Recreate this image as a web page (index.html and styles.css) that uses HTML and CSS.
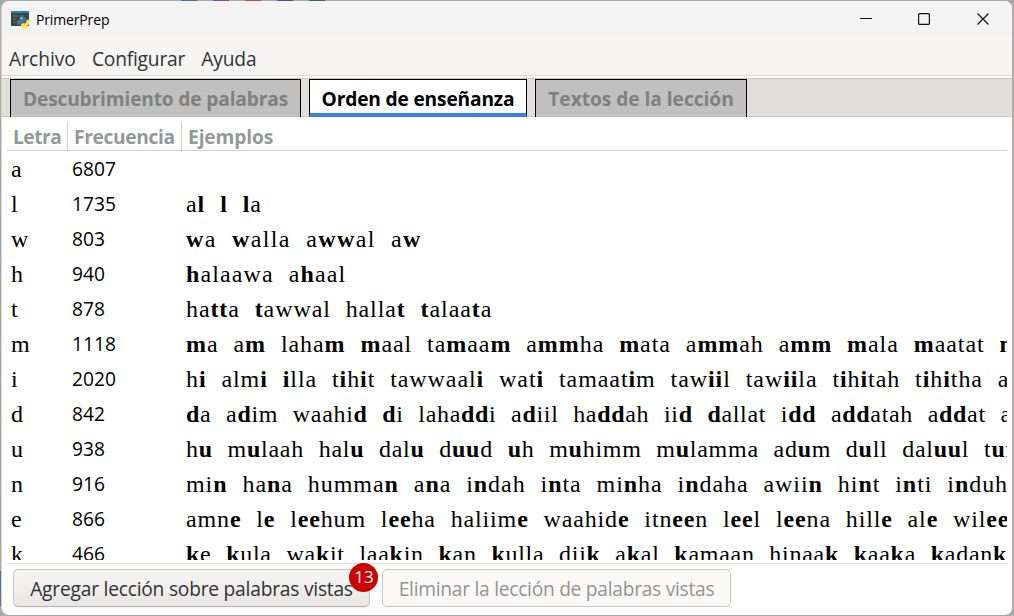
FILE: index.html
```html
<!DOCTYPE html>
<html lang="es">
<head>
<meta charset="utf-8">
<title>PrimerPrep</title>
<link rel="stylesheet" href="styles.css">
</head>
<body>
<div class="desktop">
<div class="window">
  <header class="titlebar">
    <svg class="app-icon" width="19" height="18" viewBox="0 0 19 18">
      <rect x="0" y="0" width="18" height="15" fill="#3f4547"/>
      <rect x="0" y="0" width="18" height="2" fill="#1687d9"/>
      <path d="M2 5h5M9 5h4M2 8h3M2 11h4" stroke="#4f8a52" stroke-width="1"/>
      <path d="M8.500 9V7.500Q8.500 5.500 11 5.500Q14.500 5.500 14.500 8V10Q14.500 11.500 13 11.500H10.500Q9 11.500 9 14H8Q6 14 6 11Q6 9 8.500 9Z" fill="#3f7db5"/>
      <path d="M15.500 8.500H16Q18.500 8.500 18.500 11.500Q18.500 14 16.500 14.200V15.500Q16 17.500 13 17.500Q10 17.500 10 15V13.500Q10 12.200 11.500 12.200H14Q15.500 12 15.500 8.500Z" fill="#ffdc4a"/>
      <circle cx="10.300" cy="7.300" r=".7" fill="#fff"/><circle cx="14.300" cy="15.700" r=".7" fill="#fff"/>
    </svg>
    <span class="title">PrimerPrep</span>
    <svg class="controls" width="130" height="14" viewBox="0 0 130 14" fill="none" stroke="#111">
      <path d="M0 6.500H12" stroke-width="1"/>
      <rect x="58.600" y="1.600" width="10.800" height="10.800" rx="1" stroke-width="1.200"/>
      <path d="M117.500 1.500L128.500 12.500M128.500 1.500L117.500 12.500" stroke-width="1.200"/>
    </svg>
  </header>
  <nav class="menubar"><span class="m1">Archivo</span><span class="m2">Configurar</span><span class="m3">Ayuda</span></nav>
  <div class="tabs">
    <div class="tab t1"><span>Descubrimiento de palabras</span></div>
    <div class="tab t2 active"><span>Orden de enseñanza</span></div>
    <div class="tab t3"><span>Textos de la lección</span></div>
  </div>
  <main class="table">
    <div class="head"><span class="h1">Letra</span><span class="h2">Frecuencia</span><span class="h3">Ejemplos</span></div>
    <div class="rows">
      <div class="row"><span class="letter">a</span><span class="freq">6807</span><span class="words"></span></div>
      <div class="row"><span class="letter">l</span><span class="freq">1735</span><span class="words">a<b>l</b> <b>l</b> <b>l</b>a</span></div>
      <div class="row"><span class="letter">w</span><span class="freq">803</span><span class="words r-w"><b>w</b>a <b>w</b>alla a<b>ww</b>al a<b>w</b></span></div>
      <div class="row"><span class="letter">h</span><span class="freq">940</span><span class="words r-h"><b>h</b>alaawa a<b>h</b>aal</span></div>
      <div class="row"><span class="letter">t</span><span class="freq">878</span><span class="words r-t">ha<b>tt</b>a <b>t</b>awwal halla<b>t</b> <b>t</b>alaa<b>t</b>a</span></div>
      <div class="row"><span class="letter">m</span><span class="freq">1118</span><span class="words r-m"><b>m</b>a a<b>m</b> laha<b>m</b> <b>m</b>aal ta<b>m</b>aa<b>m</b> a<b>mm</b>ha <b>m</b>ata a<b>mm</b>ah a<b>mm</b> <b>m</b>ala <b>m</b>aatat <b>m</b></span></div>
      <div class="row"><span class="letter">i</span><span class="freq">2020</span><span class="words r-i">h<b>i</b> alm<b>i</b> <b>i</b>lla t<b>i</b>h<b>i</b>t tawwaal<b>i</b> wat<b>i</b> tamaat<b>i</b>m taw<b>ii</b>l taw<b>ii</b>la t<b>i</b>h<b>i</b>tah t<b>i</b>h<b>i</b>tha a</span></div>
      <div class="row"><span class="letter">d</span><span class="freq">842</span><span class="words r-d"><b>d</b>a a<b>d</b>im waahi<b>d</b> <b>d</b>i laha<b>dd</b>i a<b>d</b>iil ha<b>dd</b>ah ii<b>d</b> <b>d</b>allat i<b>dd</b> a<b>dd</b>atah a<b>dd</b>at a</span></div>
      <div class="row"><span class="letter">u</span><span class="freq">938</span><span class="words r-u">h<b>u</b> m<b>u</b>laah hal<b>u</b> dal<b>u</b> d<b>uu</b>d <b>u</b>h m<b>u</b>himm m<b>u</b>lamma ad<b>u</b>m d<b>u</b>ll dal<b>uu</b>l t<b>u</b>r</span></div>
      <div class="row"><span class="letter">n</span><span class="freq">916</span><span class="words r-n">mi<b>n</b> ha<b>n</b>a humma<b>n</b> a<b>n</b>a i<b>n</b>dah i<b>n</b>ta mi<b>n</b>ha i<b>n</b>daha awii<b>n</b> hi<b>n</b>t i<b>n</b>ti i<b>n</b>duh</span></div>
      <div class="row"><span class="letter">e</span><span class="freq">866</span><span class="words r-e">amn<b>e</b> l<b>e</b> l<b>ee</b>hum l<b>ee</b>ha haliim<b>e</b> waahid<b>e</b> itn<b>ee</b>n l<b>ee</b>l l<b>ee</b>na hill<b>e</b> al<b>e</b> wil<b>ee</b>d</span></div>
      <div class="row"><span class="letter">k</span><span class="freq">466</span><span class="words r-k"><b>k</b>e <b>k</b>ula wa<b>k</b>it laa<b>k</b>in <b>k</b>an <b>k</b>ulla dii<b>k</b> a<b>k</b>al <b>k</b>amaan hinaa<b>k</b> <b>k</b>aa<b>k</b>a <b>k</b>adan<b>k</b></span></div>
    </div>
  </main>
  <footer class="actions">
    <div class="button add"><span>Agregar lección sobre palabras vistas</span><span class="badge">13</span></div>
    <div class="button remove"><span>Eliminar la lección de palabras vistas</span></div>
  </footer>
</div>
</div>
</body>
</html>
```
FILE: styles.css
```css
* { box-sizing: border-box; }
body { margin: 0; font-family: "Open Sans", "Noto Sans", sans-serif; font-size: 19.2px; color: #2e3436; }
.desktop {
  width: 1014px; height: 616px; padding: 1px; overflow: hidden;
  background:
    linear-gradient(90deg, transparent 181px, #2f79b5 181px 197px, transparent 197px 213px, #8b3fa8 213px 229px, transparent 229px 245px, #c0503c 245px 261px, transparent 261px 277px, #35579f 277px 293px, transparent 293px 309px, #26734a 309px 325px, transparent 325px) 0 0 / 1014px 1px no-repeat,
    linear-gradient(#4a70b0, #4a70b0) 0 571px / 1px 35px no-repeat,
    #a9a9a9;
}
.window {
  width: 1012px; height: 614px; display: flex; flex-direction: column;
  background: #fff; border-radius: 8px; overflow: hidden;
  border-right: 1px solid #b5b0ac; border-left: 1px solid #d8d6d4;
}
.titlebar { height: 37px; flex: none; background: #f3f3f3; display: flex; align-items: center; padding-left: 9px; }
.title { font-size: 14px; color: #000; margin-left: 6px; letter-spacing: -.15px; }
.controls { margin: 0 22px 2px auto; }
.menubar { height: 38px; flex: none; background: #f6f5f4; border-bottom: 1px solid #dcdad7; display: flex; align-items: center; padding: 4px 0 0 7px; gap: 16px; }
.m2 { letter-spacing: -.2px; }
.m3 { letter-spacing: -.1px; }
.tabs { height: 39px; flex: none; margin-top: 2px; background: #e1dedb; border-top: 1px solid #cdc7c2; border-bottom: 1px solid #cdc7c2; padding-left: 8px; display: flex; gap: 8px; }
.tab { height: 38px; background: #c0c0c0; border: 1px solid #000; border-bottom: 0; font-weight: 700; letter-spacing: -.18px; color: #808080; display: flex; align-items: center; justify-content: center; white-space: nowrap; }
.t1 { width: 291px; } .t2 { width: 218px; } .t3 { width: 212px; letter-spacing: -.05px; }
.tab span { padding-bottom: 1px; }
.tab.active { background: #fff; color: #000; border-bottom: 4px solid #3584e4; }
.tab.active span { padding: 3px 0 0; }
.table { height: 447px; flex: none; margin: 0 5px; overflow: hidden; border-bottom: 1px solid #e1dedb; }
.head { height: 34px; border-bottom: 1px solid #d5d0cc; font-weight: 700; color: #939899; display: flex; align-items: flex-end; white-space: nowrap; }
.head span { height: 28px; line-height: 29px; border-right: 1px solid #d5d0cc; padding-left: 6px; }
.head .h1 { width: 61px; letter-spacing: -.5px; }
.head .h2 { width: 114px; letter-spacing: -.35px; }
.head .h3 { border: 0; letter-spacing: -.12px; }
.rows { height: 409px; overflow: hidden; color: #000; }
.row { height: 35px; line-height: 35px; display: flex; white-space: nowrap; padding-left: 4px; }
.letter { width: 61px; flex: none; }
.freq { width: 114px; flex: none; }
.letter, .words { font-family: "Liberation Serif", serif; font-size: 24px; line-height: 37px; }
.words { word-spacing: 8px; letter-spacing: .94px; flex: none; }
.r-w { letter-spacing: 1.36px; }
.r-h { letter-spacing: 1.1px; }
.r-t { letter-spacing: .9px; }
.r-m { letter-spacing: .93px; }
.r-i { letter-spacing: .92px; }
.r-d { letter-spacing: .68px; }
.r-u { letter-spacing: .73px; }
.r-e { letter-spacing: .86px; }
.r-k { letter-spacing: .72px; }
.actions { flex: none; display: flex; padding: 5px 0 0 11px; gap: 12px; white-space: nowrap; }
.button { height: 38px; border: 1px solid #cdc7c2; border-radius: 5px; display: flex; align-items: center; justify-content: center; letter-spacing: -.22px; }
.add { position: relative; width: 357px; background: linear-gradient(#f6f5f4, #e9e7e5); border-bottom-color: #bab4ae; box-shadow: 0 1px 2px #0001; }
.remove { width: 349px; background: #faf9f8; color: #929595; letter-spacing: -.27px; }
.badge { position: absolute; left: 335px; top: -7px; width: 29px; height: 29px; border-radius: 50%; background: #c00; color: #fff; font-size: 17px; letter-spacing: 0; line-height: 28px; padding-left: 1px; text-align: center; }
```
